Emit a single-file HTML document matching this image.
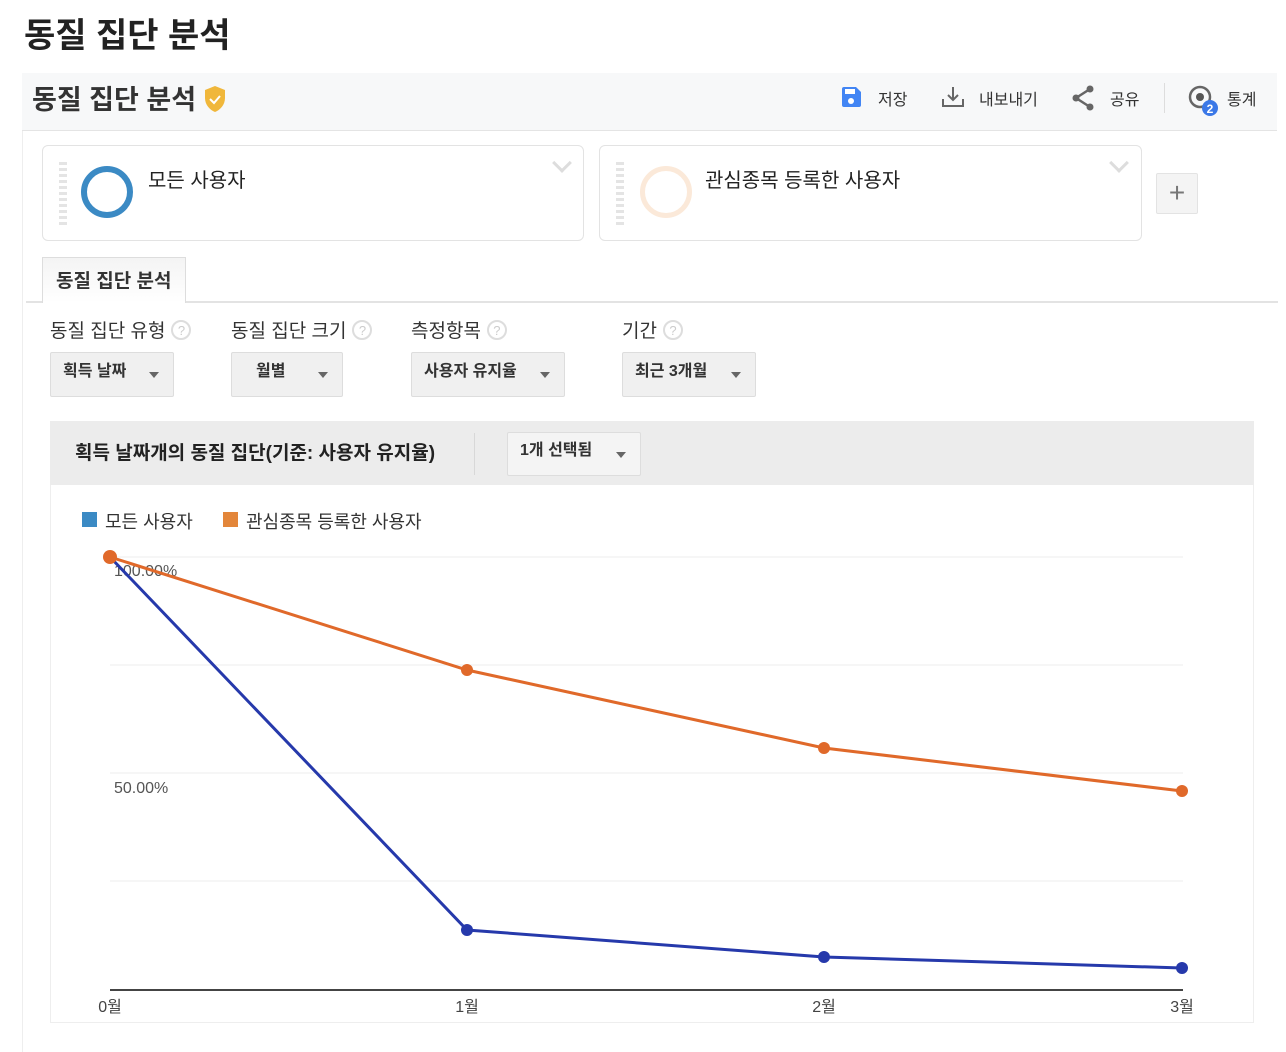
<!DOCTYPE html>
<html><head><meta charset="utf-8"><style>
*{box-sizing:border-box;margin:0;padding:0}
body{width:1286px;height:1052px;background:#fff;font-family:"Liberation Sans","Noto Sans CJK KR",sans-serif;color:#222;position:relative;overflow:hidden}
.a{position:absolute}
.h1{left:24px;top:8px;font-size:34px;font-weight:700;color:#222}
.panel{left:22px;top:73px;width:1255px;height:979px;background:#fff;border-left:1px solid #eee}
.top{left:22px;top:73px;width:1255px;height:58px;background:#f7f8f9;border-bottom:1px solid #e4e4e4}
.seg{border:1px solid #e3e3e3;border-radius:6px;background:#fff;height:96px;top:145px}
.dash{width:8px;height:66px;top:16px;left:16px;background:repeating-linear-gradient(#e4e4e4 0 3px,transparent 3px 6px)}
.chev{width:14px;height:14px;border-right:3px solid #ddd;border-bottom:3px solid #ddd;transform:rotate(45deg);top:10px}
.lbl{font-size:19px;color:#333}
.q{display:inline-block;width:20px;height:20px;border:2px solid #ddd;border-radius:50%;font-size:13px;color:#ccc;text-align:center;line-height:17px;vertical-align:2px;margin-left:6px}
.dd{top:352px;height:45px;background:#f0f0f0;border:1px solid #ddd;border-radius:2px;font-size:16px;color:#333;font-weight:700;line-height:38px;padding-left:12px}
.dd:after{content:"";position:absolute;right:14px;top:19px;border:5px solid transparent;border-top:6px solid #666}
.btn{font-size:16px;color:#333;top:86px}
</style></head><body>
<div class="a h1">동질 집단 분석</div>
<div class="a panel"></div>
<div class="a top"></div>
<div class="a" style="left:32px;top:78px;font-size:27px;font-weight:700;color:#333">동질 집단 분석</div>
<svg class="a" style="left:203px;top:85px" width="24" height="28" viewBox="0 0 24 28"><path d="M12 1L2 5v8c0 7 5 12 10 14 5-2 10-7 10-14V5z" fill="#f0b73b"/><path d="M7 14l4 4 6-7" stroke="#fff" stroke-width="2" fill="none"/></svg>
<svg class="a" style="left:840px;top:86px" width="22" height="22"><path d="M2 3a2 2 0 0 1 2-2h12l5 5v13a2 2 0 0 1-2 2H4a2 2 0 0 1-2-2z" fill="#4285f4"/><rect x="5" y="3" width="10" height="5" fill="#fff"/><circle cx="11" cy="15" r="3" fill="#fff"/></svg>
<div class="a btn" style="left:878px">저장</div>
<svg class="a" style="left:941px;top:85px" width="24" height="24" fill="none" stroke="#666" stroke-width="2"><path d="M12 2v13M7 10l5 5 5-5M2 14v7h20v-7"/></svg>
<div class="a btn" style="left:979px">내보내기</div>
<svg class="a" style="left:1071px;top:85px" width="24" height="26" fill="#666"><circle cx="19" cy="4" r="3.5"/><circle cx="5" cy="13" r="3.5"/><circle cx="19" cy="22" r="3.5"/><path d="M19 4L5 13l14 9" stroke="#666" stroke-width="2.5" fill="none"/></svg>
<div class="a btn" style="left:1110px">공유</div>
<div class="a" style="left:1164px;top:83px;width:1px;height:30px;background:#ddd"></div>
<svg class="a" style="left:1186px;top:84px" width="36" height="34"><circle cx="14" cy="13" r="10" fill="none" stroke="#666" stroke-width="2.5"/><circle cx="14" cy="13" r="4" fill="#555"/><circle cx="24" cy="24" r="8" fill="#3b78e7"/><text x="24" y="29" font-size="12" fill="#fff" text-anchor="middle" font-weight="700" font-family="Liberation Sans">2</text></svg>
<div class="a btn" style="left:1227px">통계</div>

<div class="a seg" style="left:42px;width:542px"><div class="a dash"></div><div class="a" style="left:38px;top:20px;width:52px;height:52px;border:6px solid #3b8ac4;border-radius:50%"></div><div class="a" style="left:105px;top:18px;font-size:20px">모든 사용자</div><div class="a chev" style="left:512px"></div></div>
<div class="a seg" style="left:599px;width:543px"><div class="a dash"></div><div class="a" style="left:40px;top:20px;width:52px;height:52px;border:5px solid #fbe9d9;border-radius:50%"></div><div class="a" style="left:105px;top:18px;font-size:20px">관심종목 등록한 사용자</div><div class="a chev" style="left:512px"></div></div>
<div class="a" style="left:1156px;top:173px;width:42px;height:41px;background:#f4f4f4;border:1px solid #e3e3e3;border-radius:2px;font-size:28px;color:#777;text-align:center;line-height:38px">+</div>

<div class="a" style="left:26px;top:301px;width:1252px;height:2px;background:#e3e3e3"></div>
<div class="a" style="left:42px;top:257px;width:144px;height:46px;background:linear-gradient(#f4f4f4,#fff);border:1px solid #ddd;border-bottom:none;font-size:19px;font-weight:700;padding:8px 0 0 13px;color:#333">동질 집단 분석</div>

<div class="a lbl" style="left:50px;top:316px">동질 집단 유형<span class="q">?</span></div>
<div class="a lbl" style="left:231px;top:316px">동질 집단 크기<span class="q">?</span></div>
<div class="a lbl" style="left:411px;top:316px">측정항목<span class="q">?</span></div>
<div class="a lbl" style="left:622px;top:316px">기간<span class="q">?</span></div>
<div class="a dd" style="left:50px;width:124px">획득 날짜</div>
<div class="a dd" style="left:231px;width:112px;padding-left:24px">월별</div>
<div class="a dd" style="left:411px;width:154px">사용자 유지율</div>
<div class="a dd" style="left:622px;width:134px">최근 3개월</div>

<div class="a" style="left:50px;top:421px;width:1204px;height:602px;border:1px solid #eee;background:#fff"></div>
<div class="a" style="left:50px;top:421px;width:1204px;height:64px;background:#ececec"></div>
<div class="a" style="left:75px;top:438px;font-size:19px;font-weight:700;color:#222">획득 날짜개의 동질 집단(기준: 사용자 유지율)</div>
<div class="a" style="left:474px;top:433px;width:1px;height:42px;background:#d8d8d8"></div>
<div class="a dd" style="left:507px;top:432px;width:134px;height:44px;background:#f4f4f4;line-height:36px">1개 선택됨</div>

<div class="a" style="left:82px;top:512px;width:15px;height:15px;background:#3b8ac4"></div>
<div class="a" style="left:105px;top:508px;font-size:18px;color:#333">모든 사용자</div>
<div class="a" style="left:223px;top:512px;width:15px;height:15px;background:#e3863a"></div>
<div class="a" style="left:246px;top:508px;font-size:18px;color:#333">관심종목 등록한 사용자</div>

<svg class="a" style="left:0;top:0" width="1286" height="1052">
<g stroke="#eee" stroke-width="1"><line x1="110" y1="557" x2="1183" y2="557"/><line x1="110" y1="665" x2="1183" y2="665"/><line x1="110" y1="773" x2="1183" y2="773"/><line x1="110" y1="881" x2="1183" y2="881"/></g>
<line x1="110" y1="990" x2="1183" y2="990" stroke="#444" stroke-width="2"/>
<text x="114" y="576" font-size="16" fill="#555" font-family="Liberation Sans">100.00%</text>
<text x="114" y="793" font-size="16" fill="#555" font-family="Liberation Sans">50.00%</text>
<polyline points="110,557 467,670 824,748 1182,791" fill="none" stroke="#e0692a" stroke-width="3"/>
<polyline points="110,557 467,930 824,957 1182,968" fill="none" stroke="#2639ab" stroke-width="3"/>
<g fill="#2639ab"><circle cx="467" cy="930" r="6"/><circle cx="824" cy="957" r="6"/><circle cx="1182" cy="968" r="6"/></g>
<g fill="#e0692a"><circle cx="110" cy="557" r="7"/><circle cx="467" cy="670" r="6"/><circle cx="824" cy="748" r="6"/><circle cx="1182" cy="791" r="6"/></g>
<g font-size="16" fill="#444" text-anchor="middle" font-family="Liberation Sans,Noto Sans CJK KR"><text x="110" y="1012">0월</text><text x="467" y="1012">1월</text><text x="824" y="1012">2월</text><text x="1182" y="1012">3월</text></g>
</svg>
</body></html>
